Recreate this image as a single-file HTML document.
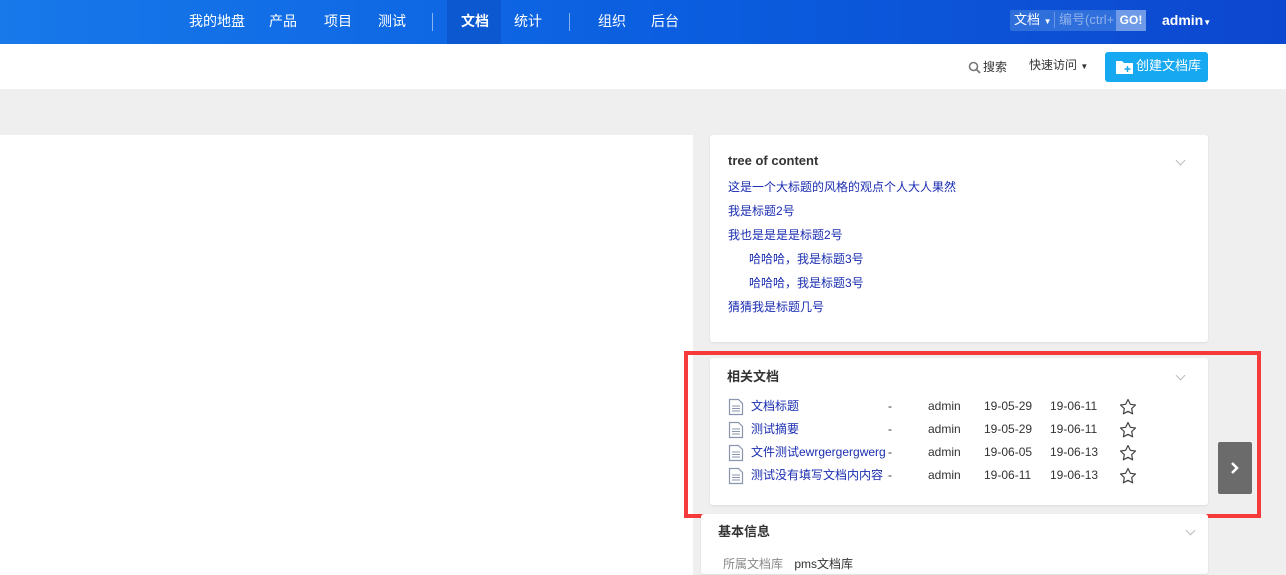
<!DOCTYPE html>
<html><head><meta charset="utf-8"><style>
*{margin:0;padding:0;box-sizing:border-box}
body{width:1286px;height:570px;overflow:hidden;background:#efefef;font-family:"Liberation Sans","Noto Sans CJK SC",sans-serif;font-size:13px;color:#333;position:relative}
.hd{position:absolute;left:0;top:0;width:1286px;height:44px;background:linear-gradient(90deg,#1779ea,#0b5fe0 50%,#0c47cf);color:#fff}
.nav a{position:absolute;top:0;line-height:42px;font-size:14px;color:#fff}
.sep{position:absolute;top:13px;width:1px;height:18px;background:rgba(255,255,255,.5)}
.sub{position:absolute;left:0;top:44px;width:1286px;height:45px;background:#fff}
.card{position:absolute;background:#fff;border-radius:3px;box-shadow:0 1px 2px rgba(0,0,0,.08)}
.t{position:absolute;font-weight:bold;font-size:13px;color:#333;line-height:16px}
.chev{position:absolute;width:7px;height:7px;border-right:1px solid #bbb;border-bottom:1px solid #bbb;transform:rotate(45deg)}
.lk{position:absolute;font-size:12px;color:#1a2db0;line-height:16px}
.row{position:absolute;left:728px;height:20px;font-size:12px;width:440px}
.row span,.row svg{position:absolute;top:0;line-height:16px}
</style></head><body>
<div class="hd">
<div class="nav">
<a style="left:189px">我的地盘</a><a style="left:269px">产品</a><a style="left:324px">项目</a><a style="left:378px">测试</a>
<div class="sep" style="left:432px"></div>
<div style="position:absolute;left:447px;top:0;width:54px;height:44px;background:#0b58d0"></div>
<a style="left:461px;font-weight:bold">文档</a><a style="left:514px">统计</a>
<div class="sep" style="left:569px"></div>
<a style="left:598px">组织</a><a style="left:651px">后台</a>
</div>
<div style="position:absolute;left:1010px;top:10px;width:136px;height:21px;background:#2f6fdc;border-radius:2px"></div>
<div style="position:absolute;left:1014px;top:12px;font-size:13px;line-height:16px">文档 <span style="font-size:8px">▼</span></div>
<div style="position:absolute;left:1054px;top:12px;width:1px;height:16px;background:#6a94e6"></div>
<div style="position:absolute;left:1059px;top:12px;font-size:13px;line-height:16px;color:#8fb0ea;width:55px;overflow:hidden;white-space:nowrap">编号(ctrl+g</div>
<div style="position:absolute;left:1116px;top:10px;width:30px;height:21px;background:#6f9ae8;font-weight:bold;font-size:12px;line-height:21px;text-align:center">GO!</div>
<div style="position:absolute;left:1162px;top:12px;font-size:14px;line-height:16px;font-weight:bold">admin<span style="font-size:8px">▼</span></div>
</div>
<div class="sub">
<svg style="position:absolute;left:968px;top:17px" width="13" height="13" viewBox="0 0 13 13"><circle cx="5.5" cy="5.5" r="4" fill="none" stroke="#777" stroke-width="1.6"/><path d="M8.5 8.5L12 12" stroke="#777" stroke-width="1.8"/></svg>
<div style="position:absolute;left:983px;top:15px;font-size:12px;line-height:16px">搜索</div>
<div style="position:absolute;left:1029px;top:13px;font-size:12px;line-height:16px">快速访问 <span style="font-size:8px">▼</span></div>
<div style="position:absolute;left:1105px;top:8px;width:103px;height:30px;background:#16a8f0;border-radius:3px;color:#fff;font-size:13px;padding-left:11px">
<svg style="position:absolute;left:11px;top:8px" width="17" height="14" viewBox="0 0 17 14"><path d="M0 1h6l2 2h9v11H0z" fill="#fff"/><path d="M11.5 6v6M8.5 9h6" stroke="#16a8f0" stroke-width="1.5"/></svg>
<span style="position:absolute;left:31px;top:6px;line-height:16px">创建文档库</span></div>
</div>
<div style="position:absolute;left:0;top:135px;width:693px;height:440px;background:#fff"></div>
<div class="card" style="left:710px;top:135px;width:498px;height:207px">
<div class="t" style="left:18px;top:18px">tree of content</div><div class="chev" style="left:467px;top:22px"></div></div>
<div class="lk" style="left:728px;top:179px">这是一个大标题的风格的观点个人大人果然</div>
<div class="lk" style="left:728px;top:203px">我是标题2号</div>
<div class="lk" style="left:728px;top:227px">我也是是是是标题2号</div>
<div class="lk" style="left:749px;top:251px">哈哈哈，我是标题3号</div>
<div class="lk" style="left:749px;top:275px">哈哈哈，我是标题3号</div>
<div class="lk" style="left:728px;top:299px">猜猜我是标题几号</div>
<div class="card" style="left:710px;top:358px;width:498px;height:147px">
<div class="t" style="left:17px;top:11px">相关文档</div><div class="chev" style="left:467px;top:14px"></div></div>
<div style="position:absolute;left:684px;top:351px;width:577px;height:167px;border:4px solid #f43a3a"></div>
<div style="position:absolute;left:1218px;top:442px;width:34px;height:52px;background:#6b6b6b;border-radius:2px"><svg style="position:absolute;left:12px;top:19px" width="10" height="14" viewBox="0 0 10 14"><path d="M2 2l5 5-5 5" fill="none" stroke="#fff" stroke-width="2.5"/></svg></div>
<div class="card" style="left:701px;top:514px;width:507px;height:60px">
<div class="t" style="left:17px;top:10px">基本信息</div><div class="chev" style="left:486px;top:13px"></div>
<div style="position:absolute;left:22px;top:42px;font-size:12px;line-height:16px;color:#888">所属文档库 <span style="color:#333;margin-left:8px">pms文档库</span></div></div>

<div class="row" style="top:398px"><svg width="16" height="18" viewBox="0 0 16 18" style="left:0;top:0"><path d="M1.5 1.5h9l4 4v11h-13z" fill="none" stroke="#8a96b0" stroke-width="1.2"/><path d="M4 8h8M4 10.5h8M4 13h8" stroke="#8a96b0"/></svg><span style="left:23px;color:#1a2db0">文档标题</span><span style="left:160px">-</span><span style="left:200px">admin</span><span style="left:256px">19-05-29</span><span style="left:322px">19-06-11</span><svg width="18" height="18" viewBox="0 0 18 18" style="left:391px;top:0"><path d="M9 1.5l2.3 4.8 5.2.7-3.8 3.6.9 5.2L9 13.3l-4.6 2.5.9-5.2L1.5 7l5.2-.7z" fill="none" stroke="#444" stroke-width="1.2" stroke-linejoin="round"/></svg></div>
<div class="row" style="top:421px"><svg width="16" height="18" viewBox="0 0 16 18" style="left:0;top:0"><path d="M1.5 1.5h9l4 4v11h-13z" fill="none" stroke="#8a96b0" stroke-width="1.2"/><path d="M4 8h8M4 10.5h8M4 13h8" stroke="#8a96b0"/></svg><span style="left:23px;color:#1a2db0">测试摘要</span><span style="left:160px">-</span><span style="left:200px">admin</span><span style="left:256px">19-05-29</span><span style="left:322px">19-06-11</span><svg width="18" height="18" viewBox="0 0 18 18" style="left:391px;top:0"><path d="M9 1.5l2.3 4.8 5.2.7-3.8 3.6.9 5.2L9 13.3l-4.6 2.5.9-5.2L1.5 7l5.2-.7z" fill="none" stroke="#444" stroke-width="1.2" stroke-linejoin="round"/></svg></div>
<div class="row" style="top:444px"><svg width="16" height="18" viewBox="0 0 16 18" style="left:0;top:0"><path d="M1.5 1.5h9l4 4v11h-13z" fill="none" stroke="#8a96b0" stroke-width="1.2"/><path d="M4 8h8M4 10.5h8M4 13h8" stroke="#8a96b0"/></svg><span style="left:23px;color:#1a2db0">文件测试ewrgergergwerg</span><span style="left:160px">-</span><span style="left:200px">admin</span><span style="left:256px">19-06-05</span><span style="left:322px">19-06-13</span><svg width="18" height="18" viewBox="0 0 18 18" style="left:391px;top:0"><path d="M9 1.5l2.3 4.8 5.2.7-3.8 3.6.9 5.2L9 13.3l-4.6 2.5.9-5.2L1.5 7l5.2-.7z" fill="none" stroke="#444" stroke-width="1.2" stroke-linejoin="round"/></svg></div>
<div class="row" style="top:467px"><svg width="16" height="18" viewBox="0 0 16 18" style="left:0;top:0"><path d="M1.5 1.5h9l4 4v11h-13z" fill="none" stroke="#8a96b0" stroke-width="1.2"/><path d="M4 8h8M4 10.5h8M4 13h8" stroke="#8a96b0"/></svg><span style="left:23px;color:#1a2db0">测试没有填写文档内内容</span><span style="left:160px">-</span><span style="left:200px">admin</span><span style="left:256px">19-06-11</span><span style="left:322px">19-06-13</span><svg width="18" height="18" viewBox="0 0 18 18" style="left:391px;top:0"><path d="M9 1.5l2.3 4.8 5.2.7-3.8 3.6.9 5.2L9 13.3l-4.6 2.5.9-5.2L1.5 7l5.2-.7z" fill="none" stroke="#444" stroke-width="1.2" stroke-linejoin="round"/></svg></div>
</body></html>
